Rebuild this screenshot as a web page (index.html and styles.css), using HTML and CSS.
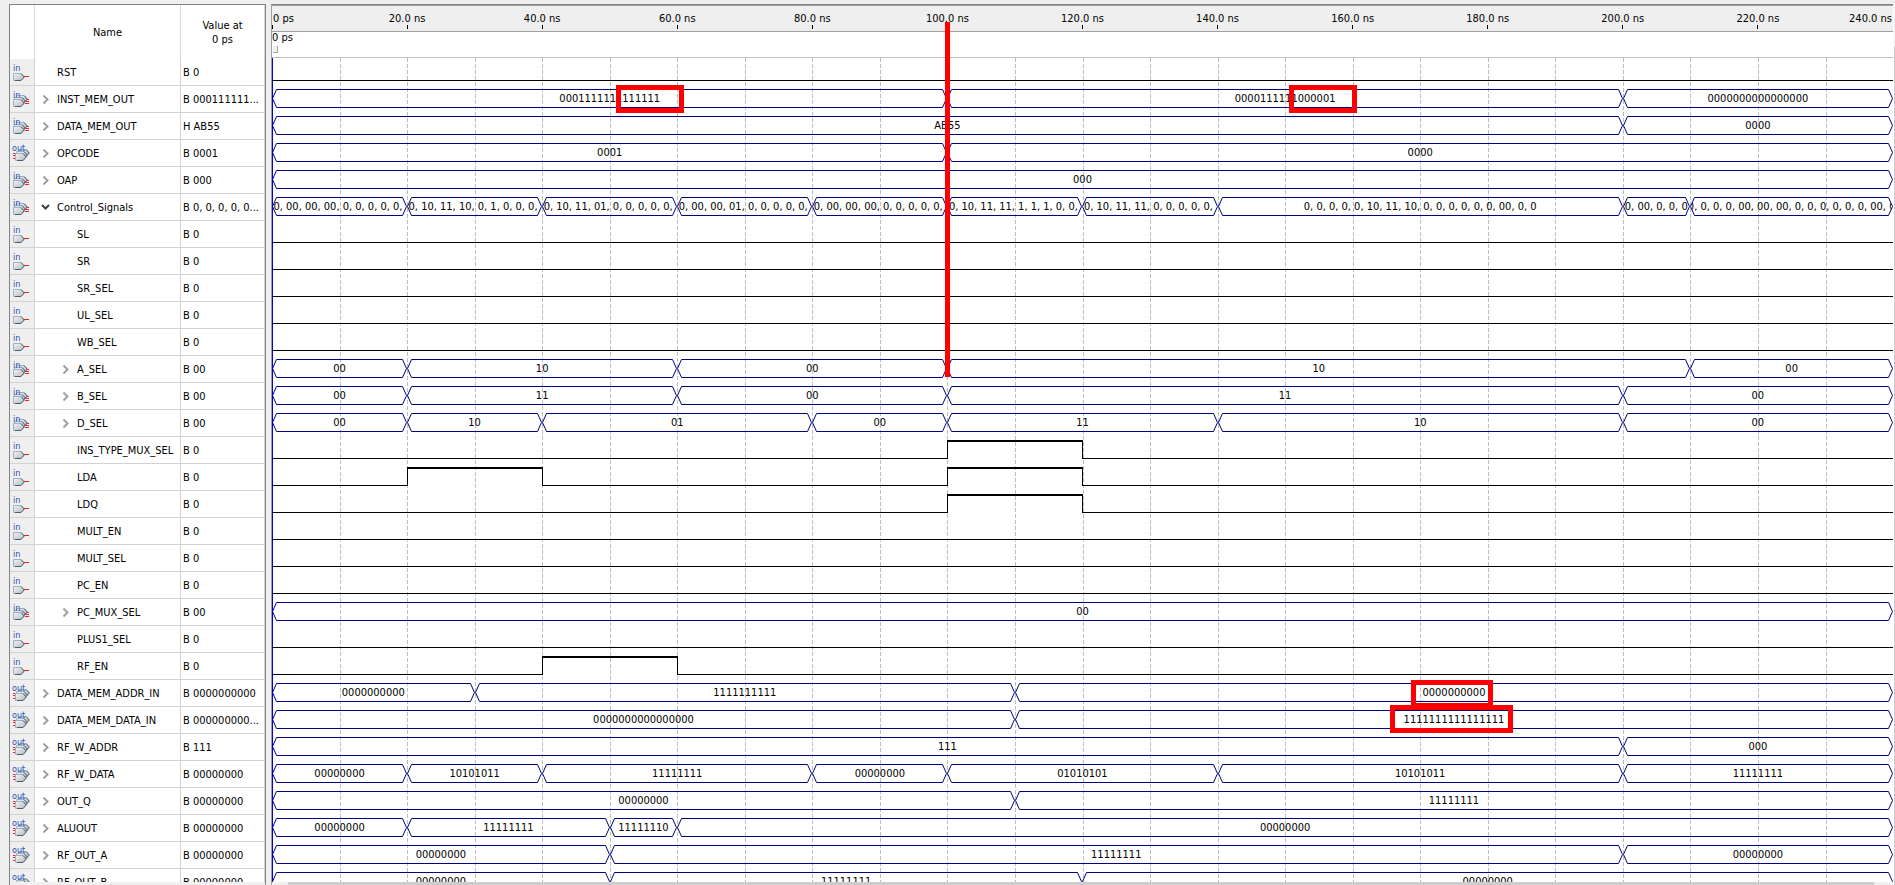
FILE: index.html
```
<!DOCTYPE html>
<html lang="en">
<head>
<meta charset="utf-8">
<title>Simulation Waveform</title>
<link rel="stylesheet" href="styles.css">
</head>
<body>
<svg class="defs" aria-hidden="true">
  <defs>
    <linearGradient id="body" x1="0" y1="0" x2="1" y2="1">
      <stop offset="0" stop-color="#f4f4f4"/><stop offset="1" stop-color="#b4babe"/>
    </linearGradient>
    <symbol id="pin" viewBox="0 0 12 8">
      <path d="M.5 .5H8L11 4L8 7.500H.5Z" fill="url(#body)" stroke="#9fb0c4"/>
      <path d="M2 7.500H8L11.300 4L8 .5" fill="none" stroke="#4c5f70"/>
    </symbol>
    <symbol id="icon-in" viewBox="0 0 24 26">
      <text x="3" y="12" class="pin-text">in</text>
      <path d="M14 17.500H19" stroke="#f02020"/>
      <use href="#pin" x="3" y="14" width="12" height="8"/>
    </symbol>
    <symbol id="icon-in-group" viewBox="0 0 24 26">
      <path d="M15 13.500H19M15 15.500H19M15 17.500H19" stroke="#f02020"/>
      <use href="#pin" x="6" y="9" width="12" height="8"/>
      <use href="#pin" x="4" y="11" width="12" height="8"/>
      <use href="#pin" x="3" y="13" width="12" height="8"/>
      <text x="3" y="12" class="pin-text">in</text>
    </symbol>
    <symbol id="icon-out-group" viewBox="0 0 24 26">
      <path d="M3 13.500H7M3 15.500H7M3 18.500H7" stroke="#f02020"/>
      <use href="#pin" x="8" y="9" width="12" height="8"/>
      <use href="#pin" x="6" y="11" width="12" height="8"/>
      <use href="#pin" x="5" y="13" width="12" height="8"/>
      <text x="2" y="11" class="pin-text">out</text>
    </symbol>
  </defs>
</svg>
<main class="viewer">
  <section class="panel signals">
    <div class="panel-body">
      <table class="signal-table">
        <colgroup><col class="col-icon"><col class="col-name"><col class="col-value"></colgroup>
        <thead><tr><th></th><th>Name</th><th>Value at<br>0 ps</th></tr></thead>
        <tbody id="signals"></tbody>
      </table>
    </div>
    <div class="scroll-track"></div>
  </section>
  <section class="panel chart">
    <div class="ruler" id="ruler"></div>
    <div class="marker-strip"><span>0 ps</span><i class="marker-handle"></i></div>
    <div class="panel-body plot">
      <div class="grid" id="grid"></div>
      <div class="waves" id="waves"></div>
    </div>
    <div class="scroll-track"><div class="scroll-thumb"></div></div>
    <div class="notes" id="notes"><div class="note-line"></div></div>
  </section>
  <div class="side-scroll"></div>
</main>
<script src="waves.js"></script>
</body>
</html>
```
FILE: styles.css
```
* { box-sizing: border-box; }
body {
  margin: 0;
  background: #efefef;
  color: #000;
  font: 11px/14px "DejaVu Sans Condensed", "DejaVu Sans", sans-serif;
  font-stretch: condensed;
}
.defs { position: absolute; width: 0; height: 0; }
.viewer {
  display: flex;
  height: 100vh;
  padding: 4px 0 0 9px;
  overflow: hidden;
}
.panel { display: flex; flex-direction: column; min-height: 0; }
.panel-body { flex: 1; min-height: 0; overflow: hidden; background: #fff; }
.scroll-track { flex: none; height: 3px; background: #f0f0f0; }

.signals {
  flex: none;
  width: 257px;
  margin-right: 5px;
  border: 1px solid #82828c;
  border-bottom: 0;
}
.signal-table { width: 100%; table-layout: fixed; border-collapse: separate; border-spacing: 0; }
.col-icon { width: 25px; }
.col-name { width: 146px; }
.signal-table th { height: 54px; padding: 2px 0 0; font-weight: normal; border-right: 1px solid #d8d8d8; }
.signal-table td {
  height: 27px;
  padding: 2px 0 0 2px;
  border-right: 1px solid #d2d2d2;
  border-bottom: 1px solid #d2d2d2;
  white-space: nowrap;
  overflow: hidden;
}
.signal-table td.icon { padding: 0; background: #efefef; }
.icon svg { display: block; width: 24px; height: 26px; }
.pin-text { font: 9px "DejaVu Sans Condensed", sans-serif; fill: #2c50b8; }
.name { display: flex; align-items: center; }
.name.child { padding-left: 20px; }
.toggle {
  width: 20px;
  height: 20px;
  padding: 0 0 2px 4px;
  border: 0;
  background: none;
  display: flex;
  align-items: center;
}
.toggle svg { width: 9px; height: 9px; fill: none; stroke: #a0a0a0; stroke-width: 2; }
.toggle.open svg { stroke: #404040; }

.chart {
  position: relative;
  flex: 1;
  min-width: 0;
  border-top: 1px solid #82828c;
  border-left: 1px solid #a0a0a0;
}
.ruler {
  flex: none;
  height: 27px;
  display: flex;
  border-top: 1px solid #a0a0a0;
  border-bottom: 1px solid #a0a0a0;
}
.tick {
  flex: 1 1 0;
  width: 0;
  display: flex;
  flex-direction: column;
  align-items: center;
  justify-content: flex-end;
  white-space: nowrap;
  line-height: 12px;
  padding-bottom: 2px;
}
.tick::after { content: ""; width: 1px; height: 4px; background: #000; }
.tick.first, .tick.last { flex-grow: 0.5; }
.tick.first { align-items: flex-start; }
.tick.first span { padding-left: 1px; }
.tick.last { align-items: flex-end; }
.tick.last span { padding-right: 1px; }
.tick.last::after { background: none; }
.marker-strip { flex: none; height: 26px; background: #fff; border-bottom: 1px solid #c0c0c0; }
.marker-strip span { display: block; line-height: 12px; height: 14px; }
.marker-handle {
  display: block;
  width: 5px;
  height: 7px;
  margin-left: 1px;
  background: #f0f0f0;
  border-right: 1px solid #a0a0a0;
  border-bottom: 1px solid #a0a0a0;
}
.plot { display: grid; }
.grid, .waves { grid-area: 1 / 1; min-width: 0; overflow: hidden; }
.grid { display: flex; box-shadow: inset 1px 0 #0000e0; }
.grid i { flex: 1 1 0; }
.grid i + i {
  background: repeating-linear-gradient(#bebebe 0 4px, transparent 4px 6px) 0 0 / 1px 100% no-repeat;
}
.waves { padding-top: 1px; }
.wave { display: flex; height: 27px; padding: 3px 0 5px; }
.seg { flex: none; min-width: 0; display: flex; }
.seg.bus svg { flex: none; width: 5px; height: 19px; fill: none; stroke: #000080; }
.bus-label {
  flex: 1;
  min-width: 0;
  display: flex;
  justify-content: center;
  margin: 0 -3px;
  height: 19px;
  line-height: 20px;
  white-space: pre;
  overflow: hidden;
  background: linear-gradient(#000080, #000080) 50% 0 / calc(100% - 6px) 1px no-repeat,
    linear-gradient(#000080, #000080) 50% 100% / calc(100% - 6px) 1px no-repeat;
}
.bus-label.start { justify-content: flex-start; }
.seg.low { border-bottom: 1px solid #000; }
.seg.high { border-top: 2px solid #000; border-left: 1px solid #000; }
.seg.high + .seg.low { border-left: 1px solid #000; }

.notes { position: absolute; inset: 0; pointer-events: none; }
.note-line {
  position: absolute;
  left: calc(100% * 100 / 240);
  top: 17px;
  width: 5px;
  height: 355px;
  margin-left: -2px;
  background: #f00;
}
.note-box { position: absolute; height: 28px; border: 5px solid #f00; }
.side-scroll {
  flex: none;
  width: 2px;
  margin-top: 1px;
  border-left: 1px solid #fff;
  background: linear-gradient(#f0f0f0 41px, #cdcdcd 41px);
}
.scroll-thumb { height: 3px; margin: 0 19px 0 16px; background: #cdcdcd; }
```
FILE: waves.js
```
const END = 240;
const Z8 = "00000000", O8 = "11111111", Z16 = Z8 + Z8, O16 = O8 + O8;
const ctl = (mid) => `0, 0, 0, 0, 0, ${mid}, 0, 00, 0, 0`;

// [name, icon, depth, value, data]
// Bus data is a list of [start ns, label]; bit data is a list of [start ns, level].
const signals = [
  ["RST", "in", 0, "B 0"],
  ["INST_MEM_OUT", "in-group", 0, "B 000111111...", [[0, "0001111111111111"], [100, "0000111111000001"], [200, Z16]]],
  ["DATA_MEM_OUT", "in-group", 0, "H AB55", [[0, "AB55"], [200, "0000"]]],
  ["OPCODE", "out-group", 0, "B 0001", [[0, "0001"], [100, "0000"]]],
  ["OAP", "in-group", 0, "B 000", [[0, "000"]]],
  ["Control_Signals", "in-group", 0, "B 0, 0, 0, 0, 0...", [
    [0, ctl("00, 00, 00, 0, 0, 0, 0, 0")], [20, ctl("10, 11, 10, 0, 1, 0, 0, 0")],
    [40, ctl("10, 11, 01, 0, 0, 0, 0, 0")], [60, ctl("00, 00, 01, 0, 0, 0, 0, 0")],
    [80, ctl("00, 00, 00, 0, 0, 0, 0, 0")], [100, ctl("10, 11, 11, 1, 1, 1, 0, 0")],
    [120, ctl("10, 11, 11, 0, 0, 0, 0, 0")], [140, ctl("10, 11, 10, 0, 0, 0, 0, 0")],
    [200, "0, 00, 0, 0, 0", "start"], [210, ctl("00, 00, 00, 0, 0, 0, 0, 0")]]],
  ["SL", "in", 1, "B 0"],
  ["SR", "in", 1, "B 0"],
  ["SR_SEL", "in", 1, "B 0"],
  ["UL_SEL", "in", 1, "B 0"],
  ["WB_SEL", "in", 1, "B 0"],
  ["A_SEL", "in-group", 1, "B 00", [[0, "00"], [20, "10"], [60, "00"], [100, "10"], [210, "00"]]],
  ["B_SEL", "in-group", 1, "B 00", [[0, "00"], [20, "11"], [60, "00"], [100, "11"], [200, "00"]]],
  ["D_SEL", "in-group", 1, "B 00", [[0, "00"], [20, "10"], [40, "01"], [80, "00"], [100, "11"], [140, "10"], [200, "00"]]],
  ["INS_TYPE_MUX_SEL", "in", 1, "B 0", [[0, 0], [100, 1], [120, 0]]],
  ["LDA", "in", 1, "B 0", [[0, 0], [20, 1], [40, 0], [100, 1], [120, 0]]],
  ["LDQ", "in", 1, "B 0", [[0, 0], [100, 1], [120, 0]]],
  ["MULT_EN", "in", 1, "B 0"],
  ["MULT_SEL", "in", 1, "B 0"],
  ["PC_EN", "in", 1, "B 0"],
  ["PC_MUX_SEL", "in-group", 1, "B 00", [[0, "00"]]],
  ["PLUS1_SEL", "in", 1, "B 0"],
  ["RF_EN", "in", 1, "B 0", [[0, 0], [40, 1], [60, 0]]],
  ["DATA_MEM_ADDR_IN", "out-group", 0, "B 0000000000", [[0, "0000000000"], [30, "1111111111"], [110, "0000000000"]]],
  ["DATA_MEM_DATA_IN", "out-group", 0, "B 000000000...", [[0, Z16], [110, O16]]],
  ["RF_W_ADDR", "out-group", 0, "B 111", [[0, "111"], [200, "000"]]],
  ["RF_W_DATA", "out-group", 0, "B " + Z8, [[0, Z8], [20, "10101011"], [40, O8], [80, Z8], [100, "01010101"], [140, "10101011"], [200, O8]]],
  ["OUT_Q", "out-group", 0, "B " + Z8, [[0, Z8], [110, O8]]],
  ["ALUOUT", "out-group", 0, "B " + Z8, [[0, Z8], [20, O8], [50, "11111110"], [60, Z8]]],
  ["RF_OUT_A", "out-group", 0, "B " + Z8, [[0, Z8], [50, O8], [200, Z8]]],
  ["RF_OUT_B", "out-group", 0, "B " + Z8, [[0, Z8], [50, O8], [120, Z8]]],
];

const capLeft = '<svg viewBox="0 0 5 19"><path d="M5 .5H4.500L.5 9.500L4.500 18.500H5"/></svg>';
const capRight = '<svg viewBox="0 0 5 19"><path d="M0 .5H.5L4.500 9.500L.5 18.500H0"/></svg>';

function toggle(name, icon) {
  if (icon === "in") return '<span class="toggle"></span>';
  const open = name === "Control_Signals";
  const d = open ? "M1 2L4.500 5.500L8 2" : "M2.500 .5L6.500 4.500L2.500 8.500";
  return `<button type="button" class="toggle${open ? " open" : ""}" aria-label="Toggle ${name}" aria-expanded="${open}"><svg viewBox="0 0 9 9"><path d="${d}"/></svg></button>`;
}

function segments(data) {
  return data.map(([start, v, align], i) => {
    const span = (i + 1 < data.length ? data[i + 1][0] : END) - start;
    const w = `style="width:${span / END * 100}%"`;
    if (typeof v === "number") return `<div class="seg ${v ? "high" : "low"}" ${w}></div>`;
    return `<div class="seg bus" ${w}>${capLeft}<div class="bus-label ${align || ""}">${v}</div>${capRight}</div>`;
  }).join("");
}

document.getElementById("signals").innerHTML = signals.map(([name, icon, depth, value]) =>
  `<tr><td class="icon"><svg aria-hidden="true"><use href="#icon-${icon}"/></svg></td>` +
  `<td><div class="name${depth ? " child" : ""}">${toggle(name, icon)}<span>${name}</span></div></td><td>${value}</td></tr>`
).join("");

document.getElementById("waves").innerHTML = signals.map(([, , , , data]) =>
  `<div class="wave">${segments(data || [[0, 0]])}</div>`).join("");

document.getElementById("grid").innerHTML = "<i></i>".repeat(END / 10);

let ticks = "";
for (let t = 0; t <= END; t += 20) {
  const edge = t === 0 ? " first" : t === END ? " last" : "";
  ticks += `<div class="tick${edge}"><span>${t ? t + ".0 ns" : "0 ps"}</span></div>`;
}
document.getElementById("ruler").innerHTML = ticks;

// Highlight boxes: [from ns, to ns, top px]
document.getElementById("notes").insertAdjacentHTML("beforeend",
  [[51, 61, 80], [150.6, 160.7, 80], [168.7, 180.8, 675], [165.6, 183.7, 700]].map(([a, b, top]) =>
    `<div class="note-box" style="left:${a / END * 100}%;width:${(b - a) / END * 100}%;top:${top}px"></div>`).join(""));
```
